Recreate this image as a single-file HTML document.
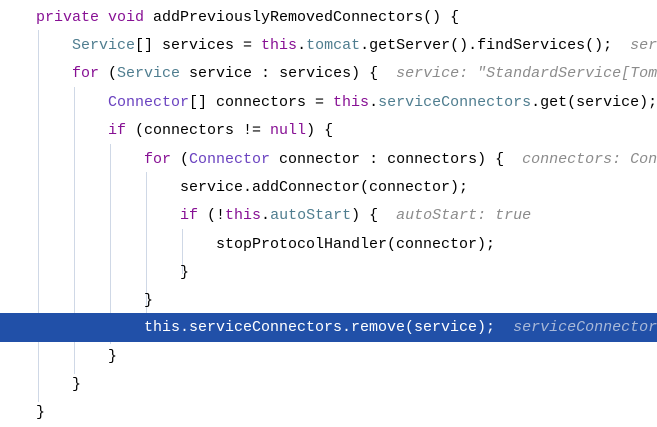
<!DOCTYPE html><html><head><style>
html,body{margin:0;width:657px;height:427px;overflow:hidden}
body{background:#fff;position:relative;font-family:"Liberation Mono",monospace;font-size:15px;}
.l{position:absolute;right:0;height:28px;line-height:28px;white-space:pre;color:#000;overflow:hidden}
.k{color:#871094}.c{color:#4f7d8f}.t{color:#6a42c0}.f{color:#4f7d8f}.h{color:#8c8c8c;font-style:italic}
.g{position:absolute;width:1px;background:#cfd8e6}
.sel{position:absolute;left:0;top:313px;width:657px;height:29px;background:#2150a8}
</style></head><body>
<div class="g" style="left:38px;top:30px;height:372px"></div>
<div class="g" style="left:74px;top:87px;height:287px"></div>
<div class="g" style="left:110px;top:144px;height:200px"></div>
<div class="g" style="left:146px;top:172px;height:144px"></div>
<div class="g" style="left:182px;top:229px;height:45px"></div>
<div class="sel"></div>
<div class="l" style="top:4px;left:36px"><span class="k">private void </span>addPreviouslyRemovedConnectors() {</div>
<div class="l" style="top:32px;left:72px"><span class="c">Service</span>[] services = <span class="k">this</span>.<span class="f">tomcat</span>.getServer().findServices();  <span class="h">services: ...</span></div>
<div class="l" style="top:60px;left:72px"><span class="k">for </span>(<span class="c">Service</span> service : services) {  <span class="h">service: "StandardService[Tomcat]"</span></div>
<div class="l" style="top:89px;left:108px"><span class="t">Connector</span>[] connectors = <span class="k">this</span>.<span class="f">serviceConnectors</span>.get(service);</div>
<div class="l" style="top:117px;left:108px"><span class="k">if </span>(connectors != <span class="k">null</span>) {</div>
<div class="l" style="top:146px;left:144px"><span class="k">for </span>(<span class="t">Connector</span> connector : connectors) {  <span class="h">connectors: Connector</span></div>
<div class="l" style="top:174px;left:180px">service.addConnector(connector);</div>
<div class="l" style="top:202px;left:180px"><span class="k">if </span>(!<span class="k">this</span>.<span class="f">autoStart</span>) {  <span class="h">autoStart: true</span></div>
<div class="l" style="top:231px;left:216px">stopProtocolHandler(connector);</div>
<div class="l" style="top:259px;left:180px">}</div>
<div class="l" style="top:287px;left:144px">}</div>
<div class="l" style="top:314px;left:144px;color:#fff">this.serviceConnectors.remove(service);  <span style="color:#a8b8d8;font-style:italic">serviceConnectors: size</span></div>
<div class="l" style="top:343px;left:108px">}</div>
<div class="l" style="top:371px;left:72px">}</div>
<div class="l" style="top:399px;left:36px">}</div>
</body></html>
